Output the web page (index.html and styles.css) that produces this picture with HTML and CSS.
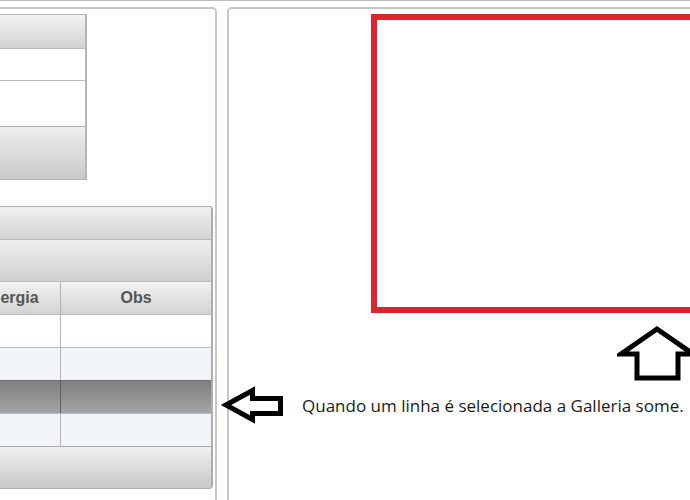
FILE: index.html
```html
<!DOCTYPE html>
<html lang="pt">
<head>
    <meta charset="UTF-8">
    <meta name="viewport" content="width=device-width, initial-scale=1.0">
    <title>Galleria</title>
    <link rel="stylesheet" href="styles.css">
</head>
<body>
    <div class="top-line"></div>
    <div class="page">
        <div class="left-panel">
            <div class="widget">
                <div class="widget-header"></div>
                <div class="widget-row"></div>
                <div class="widget-row tall"></div>
                <div class="widget-footer"></div>
            </div>

            <div class="grid">
                <div class="grid-title"></div>
                <div class="grid-toolbar"></div>
                <div class="grid-row grid-head">
                    <div class="cell first">Alergia</div>
                    <div class="cell">Obs</div>
                </div>
                <div class="grid-row">
                    <div class="cell first"></div>
                    <div class="cell"></div>
                </div>
                <div class="grid-row odd">
                    <div class="cell first"></div>
                    <div class="cell"></div>
                </div>
                <div class="grid-row selected">
                    <div class="cell first"></div>
                    <div class="cell"></div>
                </div>
                <div class="grid-row odd">
                    <div class="cell first"></div>
                    <div class="cell"></div>
                </div>
                <div class="grid-footer"></div>
            </div>
        </div>

        <div class="right-panel">
            <div class="galleria"></div>

            <svg class="up-arrow" width="80" height="58" viewBox="0 0 80 58">
                <polygon points="40,4 76,29 61,29 61,53 20,53 20,29 4,29" fill="none" stroke="#000" stroke-width="5"/>
            </svg>

            <div class="note">
                <svg class="left-arrow" width="68" height="40" viewBox="0 0 68 40">
                    <polygon points="7,20 33.5,5.5 33.5,13.5 61.5,13.5 61.5,28.5 33.5,28.5 33.5,34.5" fill="none" stroke="#000" stroke-width="5"/>
                </svg>
                <span>Quando um linha é selecionada a Galleria some.</span>
            </div>
        </div>
    </div>
</body>
</html>
```

FILE: styles.css
```css
body {
    margin: 0;
    padding: 0;
    background-color: #ffffff;
    font-family: "Liberation Sans", Arial, sans-serif;
    overflow: hidden;
    width: 690px;
    height: 500px;
}

.top-line {
    height: 1px;
    background-color: #bdbdbd;
}

.page {
    display: flex;
    gap: 10px;
    padding-top: 6px;
}

.left-panel {
    flex-shrink: 0;
    box-sizing: border-box;
    width: 257px;
    height: 520px;
    margin-left: -40px;
    padding: 5px 2px 0 0;
    border: 2px solid #c6c6c6;
    border-radius: 5px;
}

.widget {
    box-sizing: border-box;
    width: 125px;
    border: 1px solid #b5b5b5;
    border-right-width: 2px;
}

.widget-header {
    height: 33px;
    background: linear-gradient(#f3f3f3, #d2d2d2);
}

.widget-row {
    height: 31px;
    border-top: 1px solid #b8b8b8;
    background-color: #ffffff;
}

.widget-row.tall {
    height: 45px;
}

.widget-footer {
    height: 52px;
    border-top: 1px solid #b0b0b0;
    background: linear-gradient(#eeeeee, #c9c9c9);
}

.grid {
    margin-top: 26px;
    border: 1px solid #adadad;
    border-right-width: 2px;
    border-radius: 0 4px 4px 0;
    overflow: hidden;
}

.grid-title {
    height: 32px;
    background: linear-gradient(#f0f0f0, #d4d4d4);
}

.grid-toolbar {
    height: 41px;
    border-top: 1px solid #b8b8b8;
    background: linear-gradient(#eeeeee, #d0d0d0);
}

.grid-row {
    display: grid;
    grid-template-columns: 98px 1fr;
    height: 33px;
    border-top: 1px solid #bcbcbc;
    box-sizing: border-box;
    background-color: #ffffff;
}

.grid-row.odd {
    background-color: #f1f4f9;
}

.grid-row.selected {
    border-top: 1px solid #6e6e6e;
    background: linear-gradient(#7f7f7f, #a4a4a4);
}

.grid-row.selected .cell.first {
    border-right-color: #5e5e5e;
}

.grid-head {
    background: linear-gradient(#f2f2f2, #d3d3d3);
}

.cell {
    display: flex;
    align-items: center;
    justify-content: center;
    font-size: 16px;
    font-weight: bold;
    color: #555555;
}

.cell.first {
    border-right: 1px solid #b4b4b4;
}

.grid-footer {
    height: 41px;
    border-top: 1px solid #a8a8a8;
    background: linear-gradient(#f0f0f0, #c8c8c8);
}

.right-panel {
    flex-shrink: 0;
    box-sizing: border-box;
    width: 520px;
    height: 520px;
    border: 2px solid #c6c6c6;
    border-radius: 5px;
}

.galleria {
    box-sizing: border-box;
    width: 340px;
    height: 299px;
    margin: 5px 0 0 142px;
    border: 6px solid #e1232b;
}

.up-arrow {
    display: block;
    margin: 12px 0 0 388px;
}

.note {
    display: flex;
    align-items: center;
    gap: 15px;
    margin: 2px 0 0 -10px;
    font-family: "Open Sans", "Noto Sans", sans-serif;
    font-size: 17px;
    color: #1a1a1a;
    white-space: nowrap;
}

.left-arrow {
    display: block;
    flex-shrink: 0;
}
```
